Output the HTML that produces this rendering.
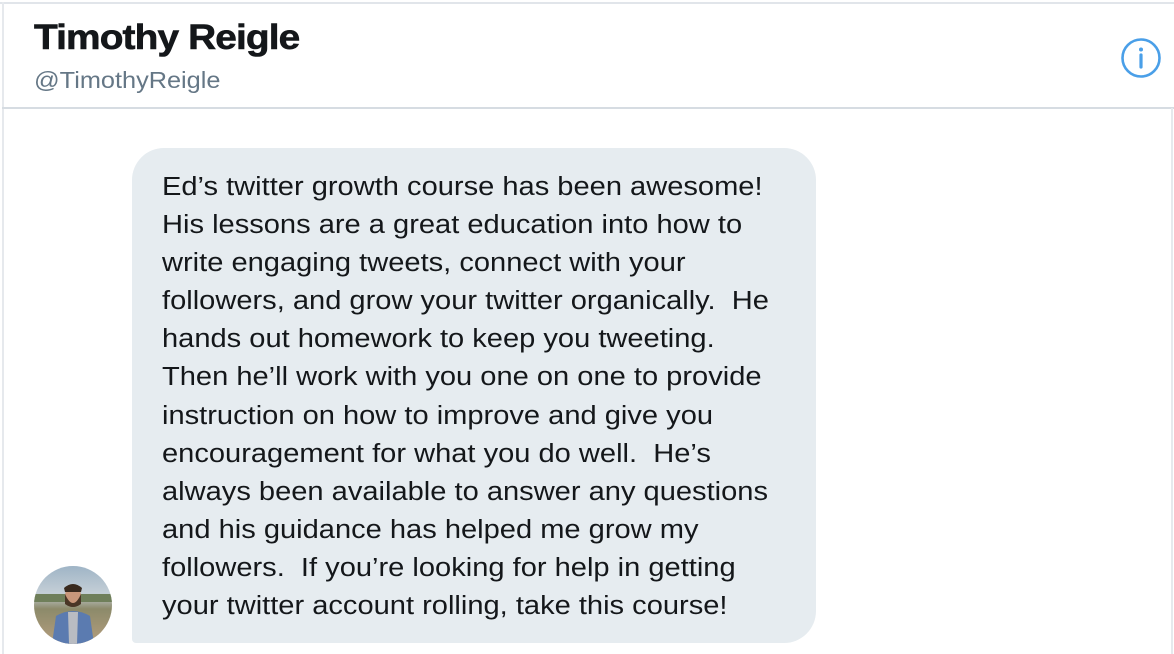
<!DOCTYPE html>
<html><head><meta charset="utf-8"><style>
html,body{margin:0;padding:0;background:#fff;width:1174px;height:654px;overflow:hidden;font-family:"Liberation Sans",Arial,sans-serif}
.top{position:absolute;left:0;top:2px;width:1174px;height:2px;background:#e1e5ea}
.left{position:absolute;left:2px;top:2px;width:2px;height:652px;background:#e6e9ed}
.right{position:absolute;left:1171px;top:108px;width:2px;height:546px;background:#e6e9ed}
.hb{position:absolute;left:2px;top:107px;width:1172px;height:2px;background:#d6dce2}
.name{position:absolute;left:34px;top:18px;font-size:35px;font-weight:bold;color:#14171a;letter-spacing:-0.8px;transform:scaleX(1.11);transform-origin:left;-webkit-text-stroke:0.6px #14171a}
.handle{position:absolute;left:34px;top:67px;font-size:23px;color:#657786;transform:scaleX(1.1);transform-origin:left}
.bubble{position:absolute;left:132px;top:148px;width:684px;height:495px;background:#e6ecf0;border-radius:32px 32px 32px 4px}
.txt{position:absolute;left:162px;top:168px;font-size:25.5px;line-height:38.1px;color:#14171a;white-space:pre;transform:scaleX(1.14);transform-origin:left}
.av{position:absolute;left:34px;top:566px;width:78px;height:78px;border-radius:50%;overflow:hidden;background:linear-gradient(#9fb4c6 0%,#c4cfd6 35%,#8c8a6a 55%,#b59e7e 100%)}
</style></head><body>
<div class="top"></div><div class="left"></div><div class="hb"></div><div class="right"></div>
<div class="name">Timothy Reigle</div>
<div class="handle">@TimothyReigle</div>
<svg style="position:absolute;left:1120px;top:37px" width="42" height="42" viewBox="0 0 42 42"><circle cx="21" cy="21" r="18.5" fill="none" stroke="#4a9fe8" stroke-width="2.6"/><circle cx="21" cy="12.5" r="2" fill="#4a9fe8"/><line x1="21" y1="18" x2="21" y2="30" stroke="#4a9fe8" stroke-width="3.2" stroke-linecap="round"/></svg>
<div class="bubble"></div>
<div class="txt">Ed’s twitter growth course has been awesome!
His lessons are a great education into how to
write engaging tweets, connect with your
followers, and grow your twitter organically.  He
hands out homework to keep you tweeting.
Then he’ll work with you one on one to provide
instruction on how to improve and give you
encouragement for what you do well.  He’s
always been available to answer any questions
and his guidance has helped me grow my
followers.  If you’re looking for help in getting
your twitter account rolling, take this course!</div>
<div class="av"><svg width="78" height="78" viewBox="0 0 78 78"><rect x="0" y="28" width="78" height="8" fill="#6f7f5a"/><ellipse cx="39" cy="30" rx="8" ry="10" fill="#c9977a"/><path d="M31 28 Q39 46 47 28 L47 38 Q39 44 31 38Z" fill="#4a3626"/><path d="M30 22 Q39 14 48 22 L47 26 L31 26Z" fill="#3a2a1e"/><path d="M18 78 L22 50 Q39 40 56 50 L60 78Z" fill="#5b7bb0"/><path d="M34 46 L44 46 L43 78 L35 78Z" fill="#b9bcc2"/></svg></div>
</body></html>
